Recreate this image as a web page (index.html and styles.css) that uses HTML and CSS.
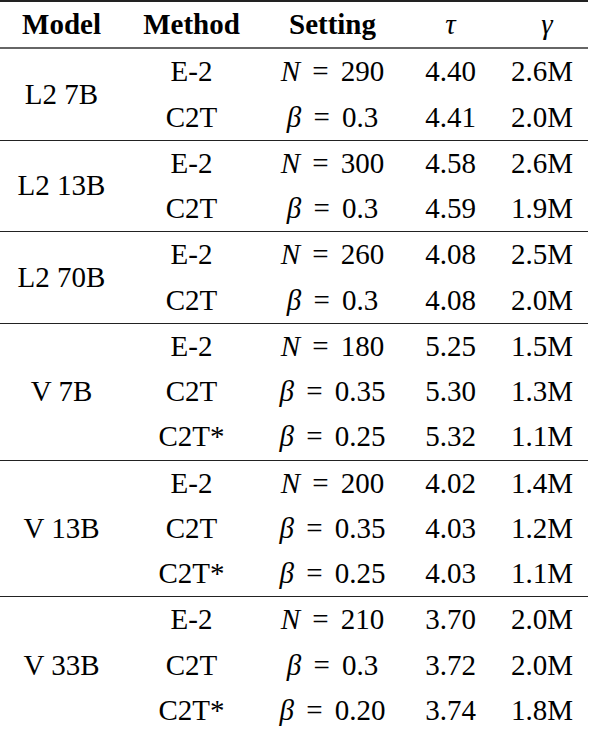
FILE: index.html
```html
<!DOCTYPE html>
<html>
<head>
    <meta charset="UTF-8">
    <title>Results Table</title>
    <link rel="stylesheet" href="styles.css">
</head>
<body>

    <!-- Results table -->
    <table class="results">
        <colgroup>
            <col class="col-model">
            <col class="col-method">
            <col class="col-setting">
            <col class="col-tau">
            <col class="col-gamma">
        </colgroup>
        <thead>
            <tr>
                <th>Model</th>
                <th>Method</th>
                <th>Setting</th>
                <th class="sym">&tau;</th>
                <th class="sym gamma">&gamma;</th>
            </tr>
        </thead>

        <tbody class="group">
            <tr>
                <td rowspan="2" class="model">L2 7B</td>
                <td>E-2</td>
                <td class="math"><i>N</i><span class="eq">=</span>290</td>
                <td>4.40</td>
                <td>2.6M</td>
            </tr>
            <tr>
                <td>C2T</td>
                <td class="math"><i>&beta;</i><span class="eq">=</span>0.3</td>
                <td>4.41</td>
                <td>2.0M</td>
            </tr>
        </tbody>

        <tbody class="group">
            <tr>
                <td rowspan="2" class="model">L2 13B</td>
                <td>E-2</td>
                <td class="math"><i>N</i><span class="eq">=</span>300</td>
                <td>4.58</td>
                <td>2.6M</td>
            </tr>
            <tr>
                <td>C2T</td>
                <td class="math"><i>&beta;</i><span class="eq">=</span>0.3</td>
                <td>4.59</td>
                <td>1.9M</td>
            </tr>
        </tbody>

        <tbody class="group">
            <tr>
                <td rowspan="2" class="model">L2 70B</td>
                <td>E-2</td>
                <td class="math"><i>N</i><span class="eq">=</span>260</td>
                <td>4.08</td>
                <td>2.5M</td>
            </tr>
            <tr>
                <td>C2T</td>
                <td class="math"><i>&beta;</i><span class="eq">=</span>0.3</td>
                <td>4.08</td>
                <td>2.0M</td>
            </tr>
        </tbody>

        <tbody class="group">
            <tr>
                <td rowspan="3" class="model">V 7B</td>
                <td>E-2</td>
                <td class="math"><i>N</i><span class="eq">=</span>180</td>
                <td>5.25</td>
                <td>1.5M</td>
            </tr>
            <tr>
                <td>C2T</td>
                <td class="math"><i>&beta;</i><span class="eq">=</span>0.35</td>
                <td>5.30</td>
                <td>1.3M</td>
            </tr>
            <tr>
                <td>C2T*</td>
                <td class="math"><i>&beta;</i><span class="eq">=</span>0.25</td>
                <td>5.32</td>
                <td>1.1M</td>
            </tr>
        </tbody>

        <tbody class="group">
            <tr>
                <td rowspan="3" class="model">V 13B</td>
                <td>E-2</td>
                <td class="math"><i>N</i><span class="eq">=</span>200</td>
                <td>4.02</td>
                <td>1.4M</td>
            </tr>
            <tr>
                <td>C2T</td>
                <td class="math"><i>&beta;</i><span class="eq">=</span>0.35</td>
                <td>4.03</td>
                <td>1.2M</td>
            </tr>
            <tr>
                <td>C2T*</td>
                <td class="math"><i>&beta;</i><span class="eq">=</span>0.25</td>
                <td>4.03</td>
                <td>1.1M</td>
            </tr>
        </tbody>

        <tbody class="group last">
            <tr>
                <td rowspan="3" class="model">V 33B</td>
                <td>E-2</td>
                <td class="math"><i>N</i><span class="eq">=</span>210</td>
                <td>3.70</td>
                <td>2.0M</td>
            </tr>
            <tr>
                <td>C2T</td>
                <td class="math"><i>&beta;</i><span class="eq">=</span>0.3</td>
                <td>3.72</td>
                <td>2.0M</td>
            </tr>
            <tr>
                <td>C2T*</td>
                <td class="math"><i>&beta;</i><span class="eq">=</span>0.20</td>
                <td>3.74</td>
                <td>1.8M</td>
            </tr>
        </tbody>
    </table>

</body>
</html>
```

FILE: styles.css
```css
 body {
     margin: 0;
     background: white;
     color: #000;
     font-family: "Liberation Serif", Tinos, serif;
     font-size: 29px;
 }
 .results {
     width: 588px;
     table-layout: fixed;
     border-collapse: collapse;
     border-top: 2px solid #222;
     border-bottom: 2px solid #444;
 }
 .col-model { width: 123px; }
 .col-method { width: 137px; }
 .col-setting { width: 145px; }
 .col-tau { width: 91px; }
 .col-gamma { width: 92px; }

 .results th,
 .results td {
     padding: 0;
     text-align: center;
     line-height: 45.25px;
     white-space: nowrap;
 }
 .results th {
     font-weight: bold;
 }
 .results thead tr {
     border-bottom: 2px solid #666;
 }
 .results th.sym {
     font-weight: normal;
     font-style: italic;
 }
 .results th.gamma {
     padding-left: 10px;
 }
 .group {
     border-bottom: 1px solid #222;
 }
 .group.last {
     border-bottom: 2px solid #444;
 }
 .model {
     vertical-align: middle;
 }
 .eq {
     margin: 0 0.42em;
 }
```
